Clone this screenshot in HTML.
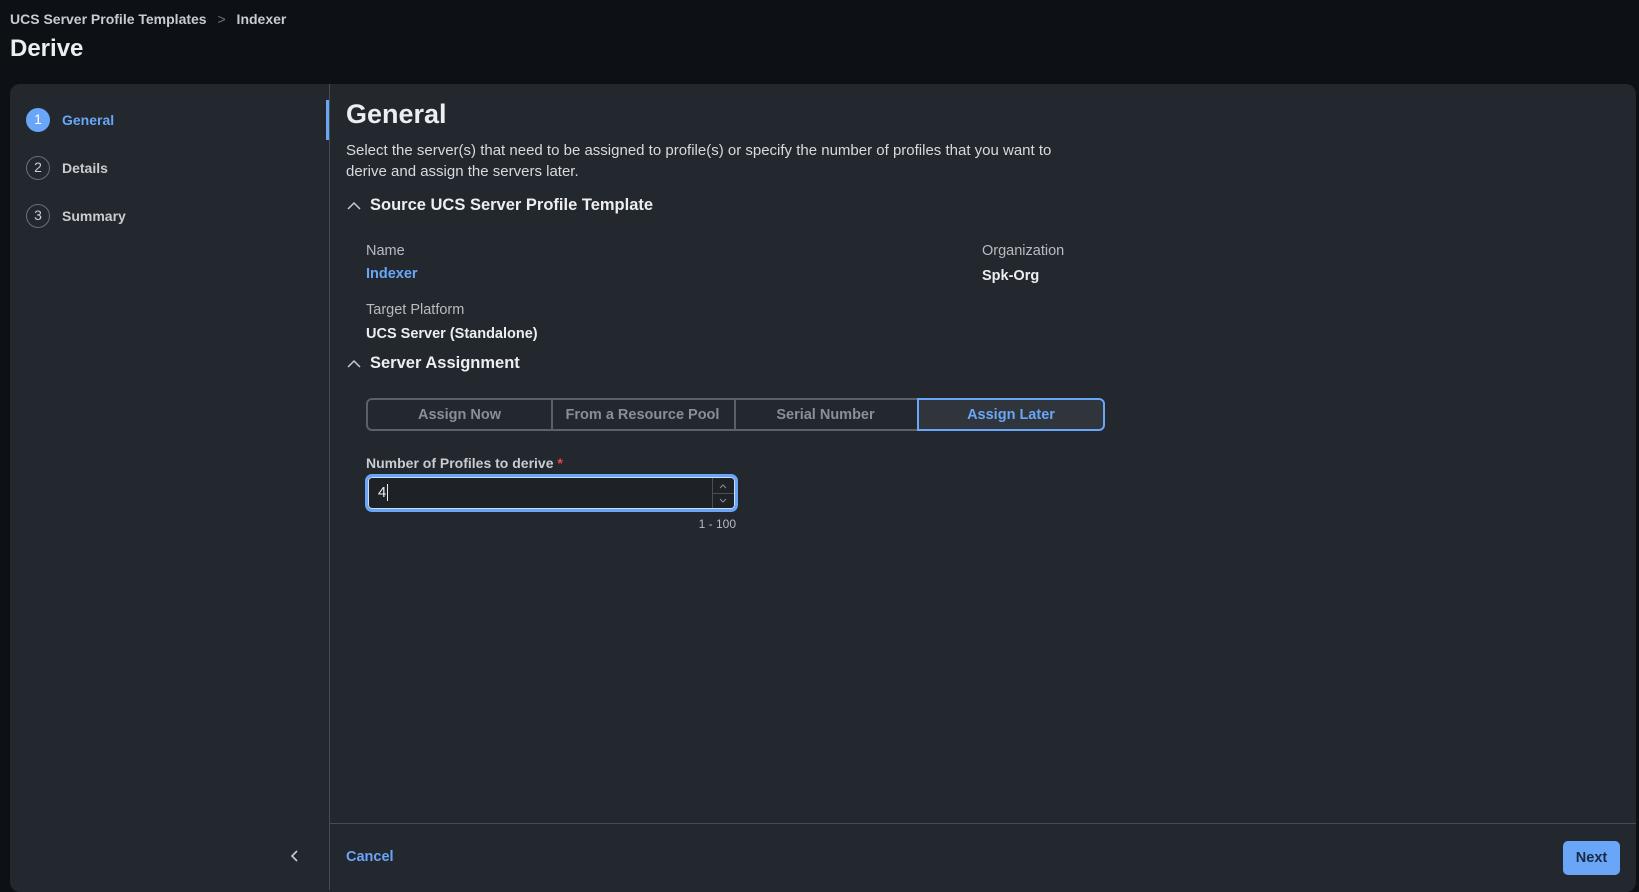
<!DOCTYPE html>
<html><head><meta charset="utf-8"><style>
*{box-sizing:border-box;margin:0;padding:0}
body{width:1639px;height:890px;background:#0d1014;font-family:"Liberation Sans",sans-serif;color:#e3e5e8;position:relative;overflow:hidden}
.a{position:absolute;white-space:nowrap}
.panel{position:absolute;left:10px;top:84px;width:1626px;height:808px;background:#23272e;border-radius:10px}
.circ{position:absolute;left:26px;width:24px;height:24px;border-radius:50%;border:1.5px solid #6b6f76;color:#c9ccd1;font-size:14px;text-align:center;line-height:21px}
.seg{position:absolute;top:398px;height:33px;border:2px solid #5c6068;color:#8a8e95;font-weight:bold;font-size:14.5px;text-align:center;line-height:30px}
</style></head><body>
<div class="a" style="left:10px;top:11px;font-size:14px;color:#c8cbd0;font-weight:bold">UCS Server Profile Templates <span style="color:#777;font-weight:normal;margin:0 7px">&gt;</span> Indexer</div>
<div class="a" style="left:10px;top:35px;font-size:24px;font-weight:bold;color:#eceef0">Derive</div>
<div class="panel"></div>
<div class="a" style="left:329px;top:84px;width:1px;height:806px;background:#474b52"></div>
<div class="a" style="left:326px;top:100px;width:3px;height:40px;background:#6aa6f8"></div>
<div class="circ" style="top:108px;background:#6aa6f8;border-color:#6aa6f8;color:#fff">1</div>
<div class="a" style="left:62px;top:112px;font-size:14px;font-weight:bold;color:#6aa6f8">General</div>
<div class="circ" style="top:156px">2</div>
<div class="a" style="left:62px;top:160px;font-size:14px;font-weight:bold;color:#c9ccd1">Details</div>
<div class="circ" style="top:204px">3</div>
<div class="a" style="left:62px;top:208px;font-size:14px;font-weight:bold;color:#c9ccd1">Summary</div>
<svg class="a" style="left:288px;top:849px" width="14" height="14"><path d="M9 2 L4 7 L9 12" stroke="#c9ccd1" stroke-width="1.6" fill="none"/></svg>

<div class="a" style="left:346px;top:99px;font-size:27px;font-weight:bold;color:#eceef0">General</div>
<div class="a" style="left:346px;top:140px;font-size:15px;line-height:21px;color:#d8dade">Select the server(s) that need to be assigned to profile(s) or specify the number of profiles that you want to<br>derive and assign the servers later.</div>
<svg class="a" style="left:347px;top:201px" width="14" height="10"><path d="M1 8 L7 2 L13 8" stroke="#c9ccd1" stroke-width="1.5" fill="none"/></svg>
<div class="a" style="left:370px;top:196px;font-size:16.5px;font-weight:bold;color:#eceef0">Source UCS Server Profile Template</div>
<div class="a" style="left:366px;top:243px;font-size:14.5px;color:#b8bbc0">Name</div>
<div class="a" style="left:366px;top:266px;font-size:14.5px;font-weight:bold;color:#6aa6f8">Indexer</div>
<div class="a" style="left:982px;top:243px;font-size:14.5px;color:#b8bbc0">Organization</div>
<div class="a" style="left:982px;top:268px;font-size:14.5px;font-weight:bold;color:#eceef0">Spk-Org</div>
<div class="a" style="left:366px;top:302px;font-size:14.5px;color:#b8bbc0">Target Platform</div>
<div class="a" style="left:366px;top:326px;font-size:14.5px;font-weight:bold;color:#eceef0">UCS Server (Standalone)</div>
<svg class="a" style="left:347px;top:359px" width="14" height="10"><path d="M1 8 L7 2 L13 8" stroke="#c9ccd1" stroke-width="1.5" fill="none"/></svg>
<div class="a" style="left:370px;top:354px;font-size:16.5px;font-weight:bold;color:#eceef0">Server Assignment</div>

<div class="seg" style="left:366px;width:187px;border-radius:6px 0 0 6px">Assign Now</div>
<div class="seg" style="left:551px;width:185px;border-left:none">From a Resource Pool</div>
<div class="seg" style="left:734px;width:185px;border-left:none">Serial Number</div>
<div class="seg" style="left:917px;width:188px;border-color:#6aa6f8;color:#6aa6f8;background:#30343b;border-radius:0 6px 6px 0">Assign Later</div>

<div class="a" style="left:366px;top:455px;font-size:14px;font-weight:bold;color:#c9ccd1">Number of Profiles to derive <span style="color:#e5484d">*</span></div>
<div class="a" style="left:365px;top:474px;width:373px;height:38px;border:3px solid #6aa6f8;border-radius:7px;background:#1e2227;box-shadow:inset 0 0 0 1px #c9dcf8"></div>
<div class="a" style="left:378px;top:484px;font-size:15px;color:#eceef0">4<span style="border-left:1px solid #eceef0;margin-left:1px"></span></div>
<div class="a" style="left:712px;top:478px;width:1px;height:30px;background:#4a4e55"></div>
<div class="a" style="left:712px;top:493px;width:22px;height:1px;background:#4a4e55"></div>
<svg class="a" style="left:718px;top:482px" width="10" height="24"><path d="M2 6 L5 3 L8 6 M2 17 L5 20 L8 17" stroke="#8a8e95" stroke-width="1" fill="none"/></svg>
<div class="a" style="left:688px;top:517px;font-size:12px;color:#b8bbc0;width:48px;text-align:right">1 - 100</div>

<div class="a" style="left:330px;top:823px;width:1306px;height:1px;background:#474b52"></div>
<div class="a" style="left:346px;top:849px;font-size:14.5px;font-weight:bold;color:#6aa6f8">Cancel</div>
<div class="a" style="left:1563px;top:841px;width:57px;height:34px;border-radius:5px;background:#6aa6f8;color:#1b2a44;font-size:14.5px;font-weight:bold;text-align:center;line-height:34px">Next</div>
</body></html>
